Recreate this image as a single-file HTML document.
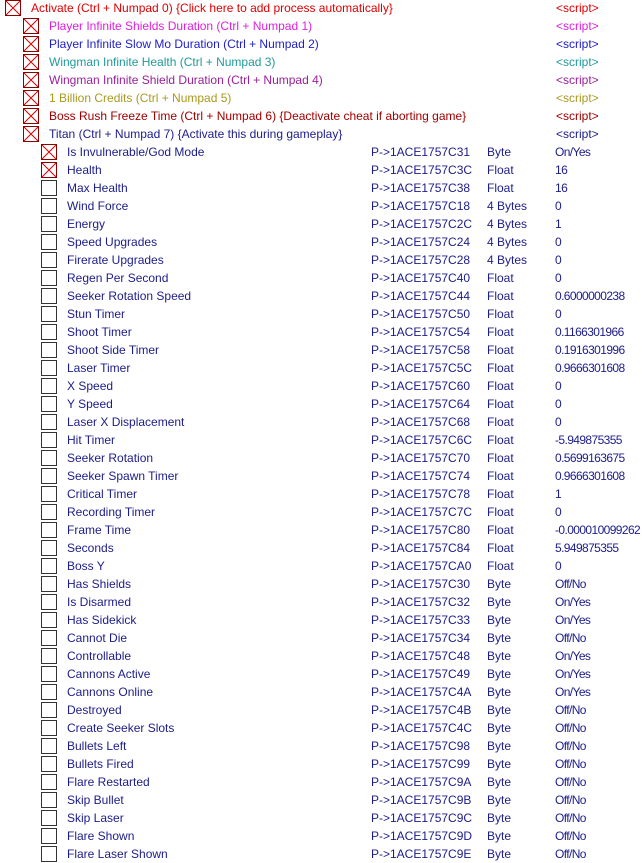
<!DOCTYPE html>
<html><head><meta charset="utf-8"><style>
body{margin:0;width:642px;height:862px;background:#fff;overflow:hidden;font-family:"Liberation Sans",sans-serif;font-size:12px;position:relative}
.r{position:absolute;left:0;height:18px;width:642px;line-height:18px;white-space:nowrap;color:#1c1c8a}
.r span{position:absolute;top:0}
.r span.v{letter-spacing:-0.6px}
.cb{position:absolute;top:1px;width:14px;height:14px;border:1px solid #333;background:#fff;box-sizing:content-box}
.cb.x{border-color:#800}
.cb.x svg{position:absolute;left:0;top:0}
</style></head><body>
<div id="c"></div>
<script>
(function(){
var X='<svg width="14" height="14"><path d="M0 0L14 14M14 0L0 14" stroke="#e00000" stroke-width="1"/></svg>';
var tops=[
[0,'Activate (Ctrl + Numpad 0) {Click here to add process automatically}','#e00000'],
[1,'Player Infinite Shields Duration (Ctrl + Numpad 1)','#e020e0'],
[1,'Player Infinite Slow Mo Duration (Ctrl + Numpad 2)','#2020c8'],
[1,'Wingman Infinite Health (Ctrl + Numpad 3)','#209a9a'],
[1,'Wingman Infinite Shield Duration (Ctrl + Numpad 4)','#9a209a'],
[1,'1 Billion Credits (Ctrl + Numpad 5)','#a89a20'],
[1,'Boss Rush Freeze Time (Ctrl + Numpad 6) {Deactivate cheat if aborting game}','#a00000'],
[1,'Titan (Ctrl + Numpad 7) {Activate this during gameplay}','#1c1c8a']];
var kids=[
['Is Invulnerable/God Mode','C31','Byte','On/Yes',1],
['Health','C3C','Float','16',1],
['Max Health','C38','Float','16'],
['Wind Force','C18','4 Bytes','0'],
['Energy','C2C','4 Bytes','1'],
['Speed Upgrades','C24','4 Bytes','0'],
['Firerate Upgrades','C28','4 Bytes','0'],
['Regen Per Second','C40','Float','0'],
['Seeker Rotation Speed','C44','Float','0.6000000238'],
['Stun Timer','C50','Float','0'],
['Shoot Timer','C54','Float','0.1166301966'],
['Shoot Side Timer','C58','Float','0.1916301996'],
['Laser Timer','C5C','Float','0.9666301608'],
['X Speed','C60','Float','0'],
['Y Speed','C64','Float','0'],
['Laser X Displacement','C68','Float','0'],
['Hit Timer','C6C','Float','-5.949875355'],
['Seeker Rotation','C70','Float','0.5699163675'],
['Seeker Spawn Timer','C74','Float','0.9666301608'],
['Critical Timer','C78','Float','1'],
['Recording Timer','C7C','Float','0'],
['Frame Time','C80','Float','-0.000010099262'],
['Seconds','C84','Float','5.949875355'],
['Boss Y','CA0','Float','0'],
['Has Shields','C30','Byte','Off/No'],
['Is Disarmed','C32','Byte','On/Yes'],
['Has Sidekick','C33','Byte','On/Yes'],
['Cannot Die','C34','Byte','Off/No'],
['Controllable','C48','Byte','On/Yes'],
['Cannons Active','C49','Byte','On/Yes'],
['Cannons Online','C4A','Byte','On/Yes'],
['Destroyed','C4B','Byte','Off/No'],
['Create Seeker Slots','C4C','Byte','Off/No'],
['Bullets Left','C98','Byte','Off/No'],
['Bullets Fired','C99','Byte','Off/No'],
['Flare Restarted','C9A','Byte','Off/No'],
['Skip Bullet','C9B','Byte','Off/No'],
['Skip Laser','C9C','Byte','Off/No'],
['Flare Shown','C9D','Byte','Off/No'],
['Flare Laser Shown','C9E','Byte','Off/No']];
var h='',y=-1;
tops.forEach(function(t){var bx=5+t[0]*18;
h+='<div class="r" style="top:'+y+'px;color:'+t[2]+'"><div class="cb x" style="left:'+bx+'px">'+X+'</div><span style="left:'+(bx+26)+'px">'+t[1]+'</span><span style="left:556px">&lt;script&gt;</span></div>';y+=18;});
kids.forEach(function(k){
h+='<div class="r" style="top:'+y+'px"><div class="cb'+(k[4]?' x':'')+'" style="left:41px">'+(k[4]?X:'')+'</div><span style="left:67px">'+k[0]+'</span><span style="left:371px">P-&gt;1ACE1757'+k[1]+'</span><span style="left:487px">'+k[2]+'</span><span class="v" style="left:555px">'+k[3]+'</span></div>';y+=18;});
document.getElementById('c').innerHTML=h;
})();
</script>
</body></html>
